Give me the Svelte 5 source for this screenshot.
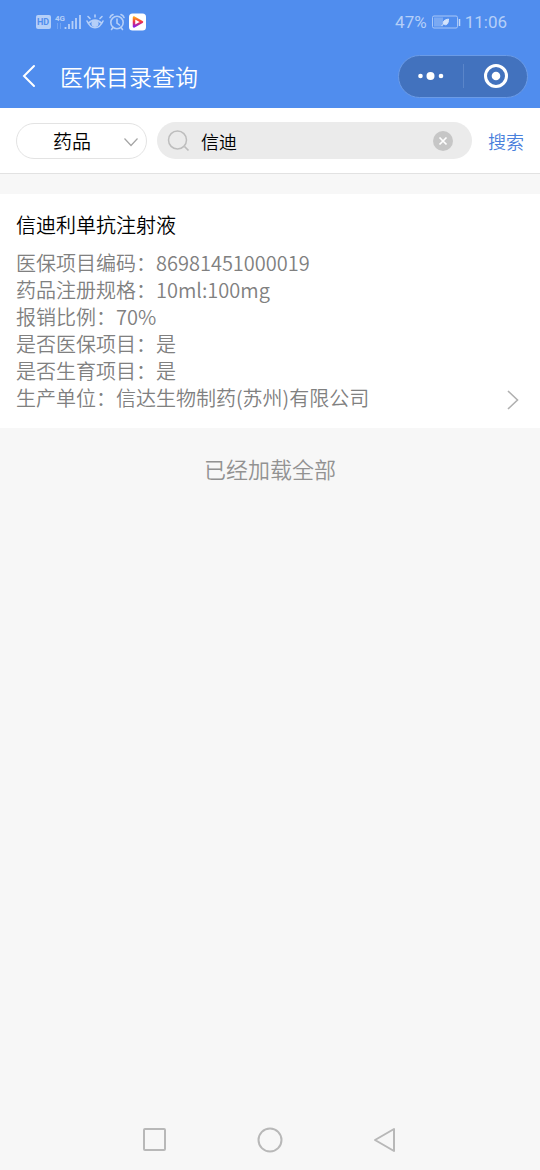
<script>
	let kind = $state('药品');
	let keyword = $state('信迪');

	const drug = {
		name: '信迪利单抗注射液',
		fields: [
			{label: '医保项目编码', value: '86981451000019'},
			{label: '药品注册规格', value: '10ml:100mg'},
			{label: '报销比例', value: '70%'},
			{label: '是否医保项目', value: '是'},
			{label: '是否生育项目', value: '是'},
			{label: '生产单位', value: '信达生物制药(苏州)有限公司'}
		]
	};
</script>

<div class="page">
	<header>
		<div class="status">
			<div class="left">
				<svg width="112" height="20" viewBox="0 0 112 20" aria-hidden="true">
					<rect x="1" y="3" width="15" height="14" rx="2" fill="#b5cff8"/>
					<text x="2" y="13" font-size="9" fill="#508dee">HD</text>
					<text x="20" y="9" font-size="8" fill="#b5cff8">4G</text>
					<path d="M22.500 11v6M25.500 11v6" stroke="#71a3f2" fill="none"/>
					<path d="M30.500 17v-2M34 17v-5M37.500 17v-8M41 17V6M45 17V3" stroke="#b5cff8" stroke-width="1.800" fill="none"/>
					<g fill="none" stroke="#b5cff8" stroke-width="1.600" stroke-linecap="round">
						<path d="M52 9c4 9 12 9 16 0M53.500 11.500c3.500-4.500 9.500-4.500 13 0M60 5V3M55 6.500L53 4.500M65 6.500l2-2"/>
						<circle cx="60" cy="11.500" r="2.800" fill="#b5cff8"/>
						<circle cx="82" cy="10.500" r="6.200"/>
						<path d="M82 7v4l2.500 2M75 5.500c.5-1.500 1.500-2.500 3-3M89 5.500c-.5-1.500-1.500-2.500-3-3M78 15.500l-1.500 2M86 15.500l1.500 2"/>
					</g>
					<defs>
						<linearGradient id="play" x1="0" y1="0" x2="0" y2="1">
							<stop offset="0" stop-color="#ff9b18"/>
							<stop offset=".5" stop-color="#f0304c"/>
							<stop offset="1" stop-color="#8a1fe0"/>
						</linearGradient>
					</defs>
					<rect x="94" y="1.500" width="17" height="17" rx="3.500" fill="#fff"/>
					<path d="M99 5.500l8 4.500-8 4.500z" fill="none" stroke="url(#play)" stroke-width="2.500" stroke-linejoin="round"/>
				</svg>
			</div>
			<div class="right">
				<span>47%</span>
				<svg width="30" height="16" viewBox="0 0 30 16" aria-hidden="true">
					<rect x="1.500" y="2" width="25" height="12" rx="1.500" fill="none" stroke="#a9c7f7"/>
					<rect x="3" y="3.500" width="9" height="9" fill="#7aa9f3"/>
					<path d="M28.500 5v7" stroke="#c3d8fa" stroke-width="1.500"/>
					<path d="M17.500 5c-4 1-6 2-5 5 3 2 5 0 5-5zM10.500 12l3-3" fill="#d3e3fc" stroke="#d3e3fc"/>
				</svg>
				<span>11:06</span>
			</div>
		</div>
		<div class="bar">
			<button class="back" aria-label="返回">
				<svg width="16" height="26" viewBox="0 0 16 26">
					<path d="M13 3L3 13l10 10" fill="none" stroke="#fff" stroke-width="2" stroke-linecap="round"/>
				</svg>
			</button>
			<h1>医保目录查询</h1>
			<div class="capsule">
				<button aria-label="更多">
					<svg width="28" height="26" viewBox="0 0 28 26" fill="#fff">
						<circle cx="3.500" cy="13" r="2.300"/>
						<circle cx="13.500" cy="13" r="4"/>
						<circle cx="24" cy="13" r="2.300"/>
					</svg>
				</button>
				<i></i>
				<button aria-label="关闭">
					<svg width="26" height="26" viewBox="0 0 26 26">
						<circle cx="14" cy="13" r="10.500" fill="none" stroke="#fff" stroke-width="3"/>
						<circle cx="14" cy="13" r="4.300" fill="#fff"/>
					</svg>
				</button>
			</div>
		</div>
	</header>

	<form class="search" onsubmit={(e) => e.preventDefault()}>
		<div class="kind">
			<select bind:value={kind} aria-label="类别">
				<option>药品</option>
				<option>诊疗</option>
			</select>
			<svg width="16" height="10" viewBox="0 0 16 10" aria-hidden="true">
				<path d="M1.500 1.500L8 8.500l6.500-7" fill="none" stroke="#a5a5a5" stroke-width="1.200"/>
			</svg>
		</div>
		<div class="box">
			<svg width="24" height="24" viewBox="0 0 24 24" aria-hidden="true">
				<path d="M17.500 17.500l4 4" stroke="#bdbdbd" stroke-width="1.700"/>
				<circle cx="10.500" cy="11" r="9" fill="none" stroke="#bdbdbd" stroke-width="1.500"/>
			</svg>
			<input type="text" bind:value={keyword} aria-label="关键字">
			<button type="button" aria-label="清空" onclick={() => (keyword = '')}>
				<svg width="20" height="20" viewBox="0 0 20 20">
					<circle cx="10" cy="10" r="10" fill="#c6c6c6"/>
					<path d="M6.500 6.500l7 7M13.500 6.500l-7 7" stroke="#fff" stroke-width="1.700"/>
				</svg>
			</button>
		</div>
		<button class="go">搜索</button>
	</form>

	<main>
		<a class="card" href="#detail">
			<div class="info">
				<h2>{drug.name}</h2>
				{#each drug.fields as f}
					<p>{f.label}：{f.value}</p>
				{/each}
			</div>
			<svg width="14" height="22" viewBox="0 0 14 22" aria-hidden="true">
				<path d="M2 2l9.500 9L2 20" fill="none" stroke="#b0b0b0" stroke-width="1.600"/>
			</svg>
		</a>
		<p class="end">已经加载全部</p>
	</main>

	<nav>
		<button aria-label="最近任务">
			<svg width="28" height="28" viewBox="0 0 28 28">
				<rect x="3" y="3" width="21" height="21" rx="1"/>
			</svg>
		</button>
		<button aria-label="主屏幕">
			<svg width="28" height="28" viewBox="0 0 28 28">
				<circle cx="14" cy="14" r="11.500"/>
			</svg>
		</button>
		<button aria-label="返回上一页">
			<svg width="28" height="28" viewBox="0 0 28 28">
				<path d="M23 3v22L4 14z"/>
			</svg>
		</button>
	</nav>
</div>

<style>
	:global(body) {
		margin: 0;
		background: #f7f7f7;
	}
	.page {
		display: flex;
		flex-direction: column;
		min-height: 100vh;
		font-family: "Noto Sans CJK SC", sans-serif;
		font-weight: 350;
		color: #000;
	}
	button {
		display: flex;
		align-items: center;
		justify-content: center;
		padding: 0;
		border: 0;
		background: none;
		font: inherit;
	}
	svg {
		display: block;
		flex: none;
	}
	h1, h2, p {
		margin: 0;
		font-weight: inherit;
	}
	header {
		background: #508dee;
		color: #fff;
	}
	.status {
		display: flex;
		justify-content: space-between;
		align-items: center;
		height: 44px;
		padding: 0 33px 0 35px;
	}
	.status text {
		font-family: Roboto, sans-serif;
		font-weight: bold;
	}
	.right {
		display: flex;
		align-items: center;
		gap: 4px;
		font: 17px Roboto, sans-serif;
		color: #b5cff8;
	}
	.bar {
		display: flex;
		align-items: center;
		height: 64px;
		padding: 0 12px 0 21px;
	}
	h1 {
		flex: 1;
		margin-left: 23px;
		font-size: 23px;
		line-height: 32px;
	}
	.capsule {
		display: flex;
		align-items: center;
		box-sizing: border-box;
		width: 130px;
		height: 43px;
		border: 1px solid #6b9be6;
		border-radius: 22px;
		background: #4272be;
	}
	.capsule button {
		flex: 1;
		height: 100%;
	}
	.capsule i {
		width: 1px;
		height: 24px;
		background: #5a85c9;
	}
	.search {
		display: flex;
		align-items: center;
		height: 65px;
		padding: 0 16px;
		border-bottom: 1px solid #e2e2e2;
		background: #fff;
	}
	.kind {
		position: relative;
		width: 131px;
	}
	.kind select {
		display: block;
		appearance: none;
		width: 100%;
		height: 36px;
		padding: 0 20px 0 36px;
		border: 1px solid #e3e3e3;
		border-radius: 18px;
		background: #fff;
		color: #000;
		font: inherit;
		font-size: 19px;
	}
	.kind svg {
		position: absolute;
		right: 8px;
		top: 14px;
		pointer-events: none;
	}
	.box {
		display: flex;
		flex: 1;
		align-items: center;
		min-width: 0;
		height: 37px;
		margin: 0 16px 0 10px;
		padding: 0 19px 0 10px;
		border-radius: 19px;
		background: #ebebeb;
	}
	.box input {
		flex: 1;
		min-width: 0;
		padding: 0 10px;
		border: 0;
		outline: 0;
		background: none;
		color: #000;
		font: inherit;
		font-size: 18px;
	}
	.go {
		color: #4a80dc;
		font-size: 18px;
	}
	main {
		flex: 1;
		padding-top: 20px;
	}
	.card {
		display: flex;
		align-items: flex-end;
		justify-content: space-between;
		padding: 17px 20px 17px 16px;
		background: #fff;
		color: #808080;
		font-size: 19px;
		line-height: 27px;
		text-decoration: none;
	}
	h2 {
		margin-bottom: 11px;
		color: #000;
		font-size: 20px;
		line-height: 27px;
	}
	.card p {
		font-size: 20px;
	}
	.end {
		padding-top: 24px;
		color: #929292;
		font-size: 22px;
		line-height: 32px;
		text-align: center;
	}
	nav {
		display: flex;
		justify-content: center;
		gap: 87px;
		padding: 16px 0;
	}
	nav svg {
		fill: none;
		stroke: #b8b8b8;
		stroke-width: 2;
		stroke-linejoin: round;
	}
</style>
